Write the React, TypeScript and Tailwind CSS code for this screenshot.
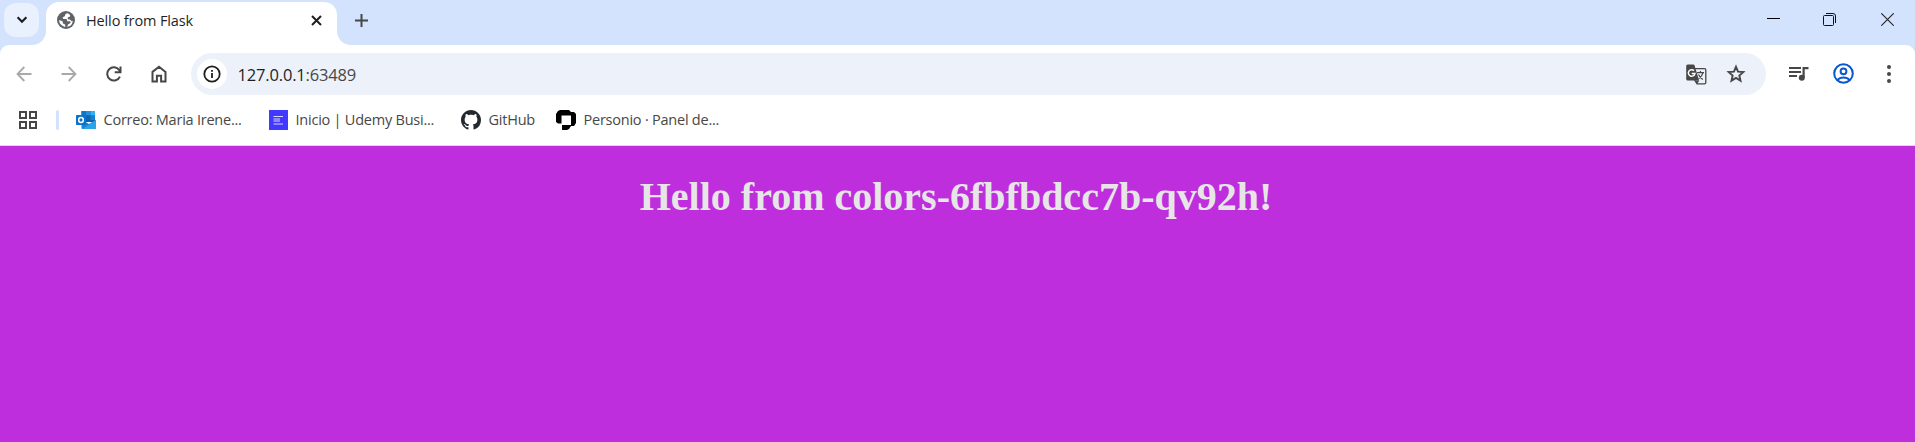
import type { ReactNode } from "react";

const UI_FONT = "font-['Open_Sans','Noto_Sans',sans-serif]";

function ChevronIcon() {
  return (
    <svg width="12" height="8" viewBox="0 0 12 8" fill="none" stroke="#1f1f1f" strokeWidth="2.2">
      <path d="M1.6 1.3 6 5.7l4.4-4.4" />
    </svg>
  );
}

function GlobeIcon() {
  return (
    <svg width="18" height="18" viewBox="0 0 18 18">
      <circle cx="9" cy="9" r="9" fill="#5f6368" />
      <path
        fill="#fff"
        d="M10.6 2.2C9 2.2 8 3.3 8 4.5c0 .8-.5 1.1-1.2 1.2-.9.1-1.2.7-1 1.4.1.7.7 1 1.4 1h1.6c.9 0 1.3.6 1.3 1.3 0 .6.4.9 1 .9h1.5c.8 0 1.1.6.9 1.3-.3.8-1 1.2-1.700 1.300-.7.1-1 .6-1 1.300 0 .7-.5 1.500-1.200 1.800A7 7 0 0 0 15.900 9.800c-.4.4-1 .5-1.500.2l-.9-.9c-.3-.4-.8-.5-1.300-.5-.9 0-1.500-.6-1.500-1.400s.6-1.300 1.400-1.300c.7 0 1-.5 1-1.200 0-.9-.5-1.500-1.200-1.800ZM2.100 8.900A7 7 0 0 0 8.300 15.900v-1.500c0-.9-.5-1.400-1.300-1.500-.8-.1-1.200-.6-1.200-1.400 0-.7-.3-1.100-.9-1.400Z"
      />
    </svg>
  );
}

function ArrowIcon({ flip = false }: { flip?: boolean }) {
  return (
    <svg
      width="16"
      height="16"
      viewBox="0 0 16 16"
      fill="none"
      stroke="#a9a9a9"
      strokeWidth="1.8"
      className={flip ? "-scale-x-100" : ""}
    >
      <path d="M8.300 1 1.500 8l6.800 7M1.500 8H15.500" />
    </svg>
  );
}

function ReloadIcon() {
  return (
    <svg width="16" height="16" viewBox="0 0 16 16" fill="none" stroke="#474747" strokeWidth="2">
      <path d="M13.900 10.600A6.600 6.600 0 1 1 13.300 4.200L14.700 5.700M14.500.5v5.800H8.700" />
    </svg>
  );
}

function HomeIcon() {
  return (
    <svg width="16" height="18" viewBox="0 0 16 18" fill="none" stroke="#474747" strokeWidth="2">
      <path d="M1.500 6.900 8 1.700l6.500 5.200V16.500H10.100V10.800H5.900v5.700H1.500Z" />
    </svg>
  );
}

function InfoIcon() {
  return (
    <svg width="18" height="18" viewBox="0 0 18 18">
      <circle cx="9" cy="9" r="7.700" fill="none" stroke="#1f1f1f" strokeWidth="1.800" />
      <path d="M8.100 8h1.800v5H8.100zM8.100 5h1.800v1.800H8.100z" fill="#1f1f1f" />
    </svg>
  );
}

function TranslateIcon() {
  return (
    <svg width="21" height="21" viewBox="0 0 21 21" fill="none">
      <path d="M9 4.700h9.500a1.300 1.300 0 0 1 1.300 1.300v12.500a1.300 1.300 0 0 1-1.300 1.300H11L8.500 16" stroke="#474747" strokeWidth="1.300" />
      <path d="M1.700.4h5.600c.6 0 1 .3 1.200.9L13.100 16.600H1.700A1.500 1.500 0 0 1 .2 15.100V1.900A1.500 1.500 0 0 1 1.700.4Z" fill="#474747" />
      <path d="m9.200 16.500 1.900 3.400 2.200-3.400Z" fill="#474747" />
      <path d="M8 6.600a3.300 3.300 0 1 0 .9 3H5.700" stroke="#fff" strokeWidth="1.500" />
      <path d="M11 8.600h7M14.400 7v1.600M16.900 8.800c-.6 2.500-2.300 4.600-4.300 6M12.500 10.400c.9 1.900 2.500 3.700 4.300 5" stroke="#474747" strokeWidth="1.200" />
    </svg>
  );
}

function StarIcon() {
  return (
    <svg width="20" height="20" viewBox="0 0 20 20" fill="none" stroke="#474747" strokeWidth="1.900">
      <path d="m10 2.800 2.050 4.850 5.250.45-3.980 3.450 1.200 5.130L10 13.950l-4.520 2.730 1.200-5.130L2.700 8.100l5.250-.45Z" />
    </svg>
  );
}

function QueueIcon() {
  return (
    <svg width="20" height="16" viewBox="0 0 20 16" fill="#474747">
      <path d="M0 1h12v2H0zM0 5h12v2H0zM0 9h8v2H0zM13.500 1H19.500v2.200H15.700V11.500h-2.200z" />
      <circle cx="12.800" cy="11.700" r="3" />
    </svg>
  );
}

function ProfileIcon() {
  return (
    <svg width="21" height="21" viewBox="0 0 21 21" fill="none" stroke="#0b57d0" strokeWidth="2">
      <circle cx="10.500" cy="10.500" r="9.300" />
      <circle cx="10.500" cy="8.300" r="2.900" />
      <path d="M4.300 17.100c1.500-1.700 3.700-2.600 6.200-2.600s4.700.9 6.200 2.600" />
    </svg>
  );
}

function OutlookIcon() {
  return (
    <svg width="20" height="18" viewBox="0 0 20 18">
      <path d="M5.500 0h12.500a1 1 0 0 1 1 1v10H5.500Z" fill="#0a5fb4" />
      <path d="M5.500 0H10v4.500H5.500z" fill="#1575c5" />
      <path d="M10 0h4.500v4.500H10z" fill="#2490dc" />
      <path d="M14.500 0H18a1 1 0 0 1 1 1v3.500h-4.500z" fill="#35b0f0" />
      <path d="M10 4.500h4.500V9H10z" fill="#0a66b8" />
      <path d="M14.500 4.500H19V9h-4.500z" fill="#1580cf" />
      <path d="M5.500 8.500 13 13l7-4.200V17a1 1 0 0 1-1 1H6.500a1 1 0 0 1-1-1Z" fill="#1685d9" />
      <path d="M20 8.800V17a1 1 0 0 1-1 1H6.500L20 8.800Z" fill="#2ba3e6" />
      <rect y="4" width="10" height="10" rx=".8" fill="#0a73cc" />
      <ellipse cx="5" cy="9" rx="2.300" ry="2.500" fill="none" stroke="#fff" strokeWidth="1.500" />
    </svg>
  );
}

function UdemyIcon() {
  return (
    <svg width="19" height="20" viewBox="0 0 19 20">
      <path d="M0 0h19v20H0z" fill="#4338ff" />
      <path d="M4.500 6.500h9.500M4.500 9h6.500M4.500 11h6.500M4.500 14h9.500" stroke="#d9d6ff" strokeWidth="1.200" />
    </svg>
  );
}

function GitHubIcon() {
  return (
    <svg width="20" height="20" viewBox="0 0 16 16" fill="#24292f">
      <path d="M8 0C3.580 0 0 3.580 0 8c0 3.540 2.290 6.530 5.470 7.590.4.070.55-.17.55-.38 0-.19-.01-.82-.01-1.490-2.010.37-2.530-.49-2.690-.94-.09-.23-.48-.94-.82-1.130-.28-.15-.68-.52-.01-.53.63-.01 1.080.58 1.230.82.72 1.210 1.870.87 2.330.66.070-.52.28-.87.51-1.070-1.780-.2-3.640-.89-3.640-3.950 0-.87.31-1.590.82-2.150-.08-.2-.36-1.020.08-2.120 0 0 .67-.21 2.200.82.64-.18 1.320-.27 2-.27s1.360.09 2 .27c1.530-1.040 2.200-.82 2.200-.82.44 1.100.16 1.920.08 2.120.51.56.82 1.270.82 2.150 0 3.070-1.870 3.750-3.650 3.950.29.25.54.73.54 1.480 0 1.070-.01 1.930-.01 2.200 0 .21.15.46.55.38A8.010 8.010 0 0 0 16 8c0-4.420-3.580-8-8-8Z" />
    </svg>
  );
}

function PersonioIcon() {
  return (
    <svg width="20" height="20" viewBox="0 0 20 20">
      <path
        fillRule="evenodd"
        d="M4 0h9l2 2h3l2 2v9l-2 3h-3l-2 3-2 1H6v-5h9V5.500H5.500V13.500H2L0 12V4l2-3Z"
      />
    </svg>
  );
}

function AppsIcon() {
  return (
    <svg width="18" height="18" viewBox="0 0 18 18" fill="none" stroke="#474747" strokeWidth="2">
      <path d="M1 1h6v6H1zM11 1h6v6h-6zM1 11h6v6H1zM11 11h6v6h-6z" />
    </svg>
  );
}

function TabStrip() {
  return (
    <header className="flex h-[45px] items-start bg-[#d3e3fd]">
      <button className="mt-[3px] ml-1 flex h-[34px] w-[35px] items-center justify-center rounded-xl bg-[#e9f0fe]">
        <ChevronIcon />
      </button>
      <div className="relative mt-[2px] ml-[7px] flex h-[43px] w-[290.5px] items-center rounded-t-[13px] bg-white pb-[7px]">
        <svg className="absolute bottom-0 -left-[14px]" width="14" height="14">
          <path d="M14 0v14H0A14 14 0 0 0 14 0Z" fill="#fff" />
        </svg>
        <svg className="absolute -right-[14px] bottom-0" width="14" height="14">
          <path d="M0 0v14h14A14 14 0 0 1 0 0Z" fill="#fff" />
        </svg>
        <span className="ml-[11px]">
          <GlobeIcon />
        </span>
        <span className="ml-[11px] w-[225px] pt-[2px] text-[14.5px] leading-5 tracking-[-0.13px] whitespace-nowrap text-[#1f1f1f]">
          Hello from Flask
        </span>
        <svg className="shrink-0" width="11" height="11" viewBox="0 0 11 11" stroke="#1f1f1f" strokeWidth="2">
          <path d="m1 1 9 9M10 1l-9 9" />
        </svg>
      </div>
      <svg className="mt-[14px] ml-[18px]" width="13" height="13" viewBox="0 0 13 13" stroke="#474747" strokeWidth="2">
        <path d="M0 6.500h13M6.500 0v13" />
      </svg>
      <div className="mt-[13px] mr-[21px] ml-auto flex items-center">
        <svg className="mr-[43px]" width="13" height="13" stroke="#000">
          <path d="M0 5.500h13" />
        </svg>
        <svg className="mr-[45px]" width="13" height="13" fill="none" stroke="#111">
          <rect x=".5" y="2.500" width="10" height="10" rx="1" />
          <path d="M3 .5h7a2.500 2.500 0 0 1 2.500 2.500v7" />
        </svg>
        <svg width="13" height="13" stroke="#222" strokeWidth="1.100">
          <path d="m.3.3 12.400 12.400M12.700.3.300 12.700" />
        </svg>
      </div>
    </header>
  );
}

function ToolButton({ children }: { children: ReactNode }) {
  return <button className="flex h-[42px] w-[45px] shrink-0 items-center justify-center pb-px">{children}</button>;
}

function Toolbar() {
  return (
    <div className="flex h-[58px] items-center pr-[4px] pl-px">
      <div className="flex">
        <ToolButton>
          <ArrowIcon />
        </ToolButton>
        <ToolButton>
          <ArrowIcon flip />
        </ToolButton>
        <ToolButton>
          <ReloadIcon />
        </ToolButton>
        <ToolButton>
          <HomeIcon />
        </ToolButton>
      </div>
      <div className="ml-[10px] flex h-[42px] flex-1 items-center rounded-full bg-[#ecf1fa] pr-[20px] pl-[6px]">
        <span className="flex size-[30px] items-center justify-center rounded-full bg-white">
          <InfoIcon />
        </span>
        <span className="ml-[10.500px] pt-px text-[16.500px] leading-6 tracking-[-0.170px] text-[#474747]">
          <span className="text-[#1f1f1f]">127.0.0.1</span>:63489
        </span>
        <span className="mt-px mr-[19px] ml-auto">
          <TranslateIcon />
        </span>
        <StarIcon />
      </div>
      <div className="ml-[10px] flex">
        <ToolButton>
          <QueueIcon />
        </ToolButton>
        <ToolButton>
          <ProfileIcon />
        </ToolButton>
        <ToolButton>
          <svg width="4" height="18" fill="#474747">
            <circle cx="2" cy="2" r="2" />
            <circle cx="2" cy="9" r="2" />
            <circle cx="2" cy="16" r="2" />
          </svg>
        </ToolButton>
      </div>
    </div>
  );
}

function Bookmark({ icon, label, width }: { icon: ReactNode; label: string; width: string }) {
  return (
    <a className={`flex shrink-0 items-center gap-[7.500px] text-[14.500px] leading-5 whitespace-nowrap text-[#474747] ${width}`}>
      {icon}
      <span className="tracking-[-0.230px]">{label}</span>
    </a>
  );
}

function BookmarksBar() {
  return (
    <nav className="flex h-[43px] items-center border-b border-[#dadce0] pb-[9px] pl-[19px]">
      <AppsIcon />
      <span className="mr-[17px] ml-[19px] h-5 w-[3px] rounded-full bg-[#d3e3fd]" />
      <Bookmark icon={<OutlookIcon />} label="Correo: Maria Irene..." width="w-[193px]" />
      <Bookmark icon={<UdemyIcon />} label="Inicio | Udemy Busi..." width="w-[192px]" />
      <Bookmark icon={<GitHubIcon />} label="GitHub" width="w-[95px]" />
      <Bookmark icon={<PersonioIcon />} label="Personio · Panel de..." width="w-[180px]" />
    </nav>
  );
}

export default function App() {
  return (
    <div className={`flex h-[442px] w-full flex-col overflow-hidden bg-[#d3e3fd] ${UI_FONT}`}>
      <TabStrip />
      <div className="rounded-t-[9px] bg-white">
        <Toolbar />
        <BookmarksBar />
      </div>
      <main className="flex-1 bg-[#be2edd] pt-[28px] pr-[3px]">
        <h1 className="text-center font-['Liberation_Serif',serif] text-[40px] leading-[46px] font-bold text-[#e6e6e6]">
          Hello from colors-6fbfbdcc7b-qv92h!
        </h1>
      </main>
    </div>
  );
}
